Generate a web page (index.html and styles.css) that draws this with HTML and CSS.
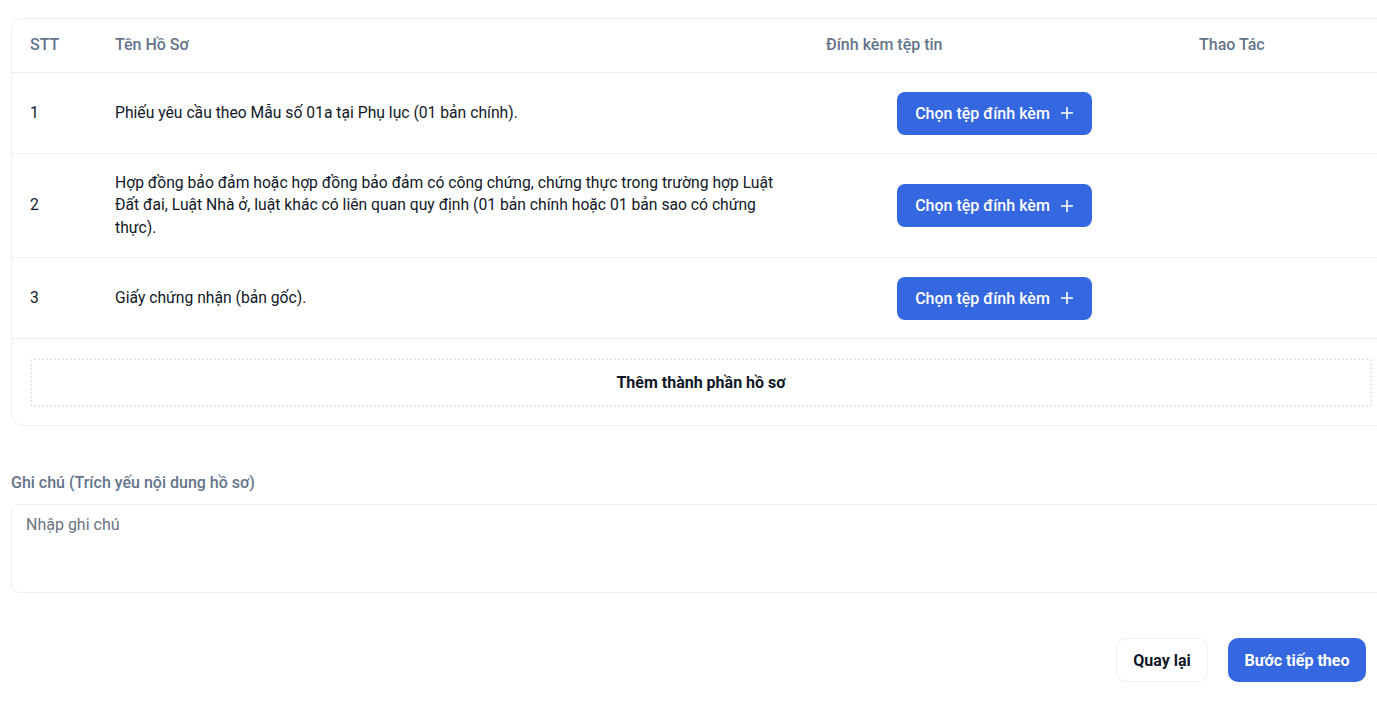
FILE: index.html
```html
<!DOCTYPE html>
<html lang="vi">
<head>
<meta charset="utf-8">
<title>Thành phần hồ sơ</title>
<link rel="stylesheet" href="styles.css">
</head>
<body>
<div class="page">
  <div class="card">
    <div class="row head">
      <div class="cell">STT</div>
      <div class="cell">Tên Hồ Sơ</div>
      <div class="cell">Đính kèm tệp tin</div>
      <div class="cell">Thao Tác</div>
    </div>
    <div class="row">
      <div class="cell">1</div>
      <div class="cell">Phiếu yêu cầu theo Mẫu số 01a tại Phụ lục (01 bản chính).</div>
      <div class="cell center"><button class="btn-attach">Chọn tệp đính kèm <svg width="14" height="14" viewBox="0 0 14 14"><path d="M7 1v12M1 7h12" stroke="#fff" stroke-width="1.6" fill="none"/></svg></button></div>
      <div class="cell"></div>
    </div>
    <div class="row tall">
      <div class="cell">2</div>
      <div class="cell">Hợp đồng bảo đảm hoặc hợp đồng bảo đảm có công chứng, chứng thực trong trường hợp Luật Đất đai, Luật Nhà ở, luật khác có liên quan quy định (01 bản chính hoặc 01 bản sao có chứng thực).</div>
      <div class="cell center"><button class="btn-attach">Chọn tệp đính kèm <svg width="14" height="14" viewBox="0 0 14 14"><path d="M7 1v12M1 7h12" stroke="#fff" stroke-width="1.6" fill="none"/></svg></button></div>
      <div class="cell"></div>
    </div>
    <div class="row">
      <div class="cell">3</div>
      <div class="cell">Giấy chứng nhận (bản gốc).</div>
      <div class="cell center"><button class="btn-attach">Chọn tệp đính kèm <svg width="14" height="14" viewBox="0 0 14 14"><path d="M7 1v12M1 7h12" stroke="#fff" stroke-width="1.6" fill="none"/></svg></button></div>
      <div class="cell"></div>
    </div>
    <div class="add-wrap">
      <div class="add-box">Thêm thành phần hồ sơ</div>
    </div>
  </div>

  <div class="note">
    <label class="note-label">Ghi chú (Trích yếu nội dung hồ sơ)</label>
    <div class="note-input">Nhập ghi chú</div>
  </div>

  <div class="actions">
    <button class="btn-back">Quay lại</button>
    <button class="btn-next">Bước tiếp theo</button>
  </div>
</div>
</body>
</html>
```

FILE: styles.css
```css
html, body {
  margin: 0;
  padding: 0;
  background: #fff;
  overflow: hidden;
}
body {
  font-family: Roboto, "Liberation Sans", sans-serif;
  color: #111827;
  width: 1377px;
  height: 702px;
}
.page {
  padding: 18px 0 0 11px;
  width: 1380px;
}
.card {
  width: 1380px;
  border: 1px solid #eceff4;
  border-radius: 12px;
  box-sizing: border-box;
}
.row {
  display: grid;
  grid-template-columns: 85px 711px 373px 1fr;
  height: 81px;
  box-sizing: border-box;
  border-bottom: 1px solid #eceff4;
  font-size: 15.7px;
  line-height: 22.5px;
}
.row.head {
  height: 54px;
  color: #64748b;
  font-weight: 500;
  font-size: 16px;
}
.row.tall {
  height: 104px;
}
.cell {
  display: flex;
  align-items: center;
  padding: 0 18px;
}
.cell.center {
  justify-content: center;
}
.btn-attach {
  height: 43px;
  width: 195px;
  border: none;
  border-radius: 8px;
  background: #3568e0;
  color: #fff;
  font-family: Roboto, sans-serif;
  font-size: 16px;
  font-weight: 500;
  display: flex;
  align-items: center;
  justify-content: center;
  gap: 10px;
  padding: 0;
  white-space: nowrap;
}
.add-wrap {
  padding: 19px 18px 18px;
}
.add-box {
  height: 49px;
  border: 2px dotted #e2e6ee;
  border-radius: 4px;
  display: flex;
  align-items: center;
  justify-content: center;
  font-weight: 700;
  font-size: 16px;
  color: #111827;
  box-sizing: border-box;
}
.note {
  margin-top: 46px;
}
.note-label {
  display: block;
  color: #64748b;
  font-size: 16px;
  font-weight: 500;
  line-height: 22px;
  margin-bottom: 10px;
}
.note-input {
  height: 89px;
  border: 1px solid #eceff4;
  border-radius: 8px;
  box-sizing: border-box;
  padding: 10px 14px;
  color: #6b7280;
  font-size: 16px;
  line-height: 20px;
}
.actions {
  display: flex;
  justify-content: flex-end;
  gap: 20px;
  margin-top: 45px;
  padding-right: 25px;
}
.btn-back, .btn-next {
  height: 44px;
  border-radius: 10px;
  font-family: Roboto, sans-serif;
  font-size: 16px;
  font-weight: 700;
  padding: 0;
  white-space: nowrap;
}
.btn-back {
  background: #fff;
  border: 1px solid #eceff4;
  color: #111827;
  width: 92px;
}
.btn-next {
  background: #3568e0;
  border: none;
  color: #fff;
  width: 138px;
}
```
